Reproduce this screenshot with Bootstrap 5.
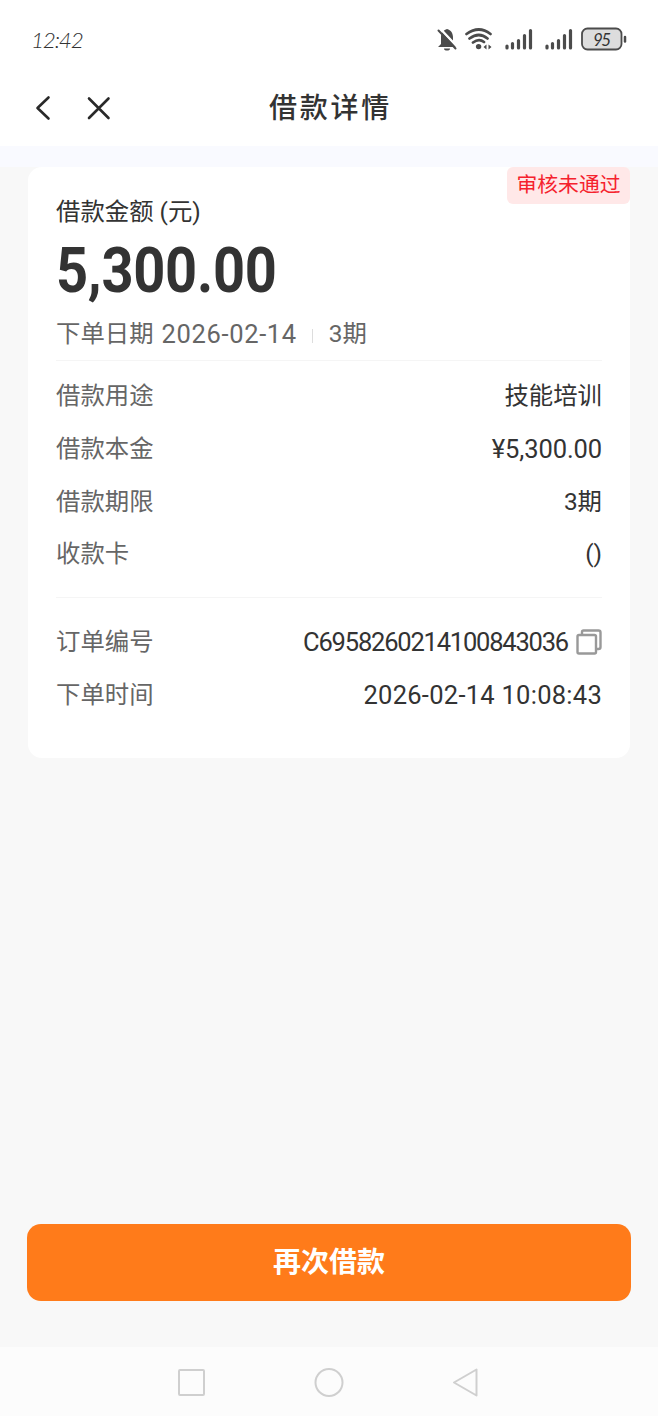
<!DOCTYPE html>
<html lang="zh-CN">
<head>
<meta charset="utf-8">
<meta name="viewport" content="width=device-width, initial-scale=1">
<title>借款详情</title>
<link href="https://cdn.jsdelivr.net/npm/bootstrap@5.3.0/dist/css/bootstrap.min.css" rel="stylesheet">
<style>
  body { background:#f8f8f8; color:#333; font-family:Roboto,"Noto Sans CJK SC",sans-serif; font-size:24.4px; line-height:36px; }
  .screen { height:1416px; overflow:hidden; }
  .status { height:80px; padding:0 30px 0 31px; }
  .clock { font:italic 300 22.5px/30px Lato,sans-serif; letter-spacing:-1.2px; color:#333; }
  .topbar { height:66px; }
  .page-title { font-family:"Noto Sans CJK SC",sans-serif; font-size:28px; letter-spacing:2.7px; line-height:36px; padding-left:3px; }
  .band { background:#f9faff; height:21px; }
  .loan { margin:0 28px; height:591px; border-radius:14px; padding:27px 28px 0 28px; background:#fff; }
  .state { top:0; right:0; width:123px; height:37px; border-radius:6px; background:#ffe8e8; color:#f5222d; font-size:20.8px; line-height:37px; }
  .amount { font-size:63.5px; font-weight:700; line-height:81px; transform:scaleX(.882); transform-origin:left; height:86px; letter-spacing:-.3px; }
  .muted { color:#666; }
  .num { font-size:25.5px; }
  .date { letter-spacing:.65px; }
  .stamp { letter-spacing:.27px; }
  .money { letter-spacing:-.1px; }
  .order { letter-spacing:-1.2px; }
  .sep { width:1px; height:14px; background:#ddd; margin:4px 16px 0 15px; }
  .rule { height:1px; background:#f5f5f5; }
  .line { height:52.7px; }
  .specs { padding-top:9px; }
  .ids { padding-top:18px; }
  .again { margin:0 27px; height:77px; border-radius:14px; background:#ff7b1a; color:#fff; font-size:28px; font-weight:700; }
  .again:hover { background:#ff7b1a; color:#fff; }
  .sysnav { height:69px; margin-top:46px; background:#fcfcfc; }
</style>
</head>
<body>
<div class="screen d-flex flex-column">
  <header class="bg-white">
    <div class="status d-flex align-items-center justify-content-between">
      <span class="clock">12:42</span>
      <svg width="192" height="30" viewBox="436 25 192 30" fill="none" stroke="#4b4b4b" stroke-linecap="round">
        <path d="M441 44V37C441 32 444 30 447 29C451 30 453 33 453 38V42L456 47H438Z" fill="#4b4b4b" stroke="none"/>
        <path d="M444 48.500h6a3 2 0 0 1-6 0Z" fill="#4b4b4b" stroke="none"/>
        <path d="M440.500 29L457.500 47" stroke="#fff" stroke-width="2.500"/>
        <path d="M438.500 30.500L455.500 48.500" stroke-width="2"/>
        <path d="M466.500 34Q479 25 490.500 34M469.500 38.500Q479 31.500 487.500 38.500M473 42.500Q479 38 484 42" stroke-width="2.700"/>
        <circle cx="478.600" cy="46.600" r="2.700" fill="#4b4b4b" stroke="none"/>
        <path d="M486.500 44.500V49.500L483.500 47ZM488.500 44.500V49.500L491.500 47Z" fill="#4b4b4b" stroke="none"/>
        <path d="M507 46v2M512.500 43.500v4.500M518.500 40.500v7.500M524.500 35.500v12.500M530.500 30.500v17.500M547 46v2M552.500 43.500v4.500M558.500 40.500v7.500M564.500 35.500v12.500M570.500 30.500v17.500" stroke-width="3.200"/>
        <rect x="582" y="28.500" width="39.500" height="21" rx="5.500" fill="#ddd" stroke-width="1.800"/>
        <path d="M625 37v4.500" stroke-width="2.500"/>
        <text x="593" y="45.500" font-family="Lato,sans-serif" font-style="italic" font-size="17" fill="#333" stroke="none" textLength="18">95</text>
      </svg>
    </div>
    <div class="topbar position-relative d-flex justify-content-center pt-2">
      <svg class="position-absolute top-0 start-0" width="120" height="56" viewBox="0 80 120 56" fill="none" stroke="#292929" stroke-width="2.600" stroke-linecap="round" stroke-linejoin="round"><path d="M48.500 97.500L37.500 108L48.500 118.500M89 98.500L108.500 118M108.500 98.500L89 118"/></svg>
      <h1 class="page-title m-0 fw-medium">借款详情</h1>
    </div>
  </header>
  <div class="band"></div>
  <main class="loan position-relative">
    <div class="state position-absolute text-center">审核未通过</div>
    <div>借款金额 (元)</div>
    <div class="amount">5,300.00</div>
    <div class="muted d-flex align-items-center"><span>下单日期</span><span class="num date ms-2">2026-02-14</span><span class="sep"></span><span>3期</span></div>
    <div class="rule mt-2"></div>
    <div class="specs">
      <div class="line d-flex align-items-center justify-content-between"><span class="muted">借款用途</span><span>技能培训</span></div>
      <div class="line d-flex align-items-center justify-content-between"><span class="muted">借款本金</span><span class="num money">¥5,300.00</span></div>
      <div class="line d-flex align-items-center justify-content-between"><span class="muted">借款期限</span><span>3期</span></div>
      <div class="line d-flex align-items-center justify-content-between"><span class="muted">收款卡</span><span>()</span></div>
    </div>
    <div class="rule mt-3"></div>
    <div class="ids">
      <div class="line d-flex align-items-center justify-content-between"><span class="muted">订单编号</span>
        <span class="d-flex align-items-center"><span class="num order">C6958260214100843036</span>
          <svg class="ms-2" width="26" height="26" viewBox="0 0 26 26" fill="none" stroke="#999" stroke-width="2.400"><path d="M6 5V3Q6 1.500 7.500 1.500H22.500Q24.500 1.500 24.500 3.500V18Q24.500 20 22.500 20H20"/><rect x="1.500" y="6" width="18.500" height="18.500" rx="1.500"/></svg></span></div>
      <div class="line d-flex align-items-center justify-content-between"><span class="muted">下单时间</span><span class="num stamp">2026-02-14 10:08:43</span></div>
    </div>
  </main>
  <button class="again btn border-0 mt-auto flex-shrink-0">再次借款</button>
  <nav class="sysnav flex-shrink-0">
    <svg class="d-block" width="658" height="69" viewBox="0 1347 658 69" fill="none" stroke="#cfcfcf" stroke-width="2" stroke-linejoin="round"><rect x="179" y="1370" width="25" height="25" rx="1"/><circle cx="329" cy="1382.500" r="13.500"/><path d="M476.500 1369.500V1395.500L454 1382.500Z"/></svg>
  </nav>
</div>
<script src="https://cdn.jsdelivr.net/npm/bootstrap@5.3.0/dist/js/bootstrap.bundle.min.js"></script>
</body>
</html>
